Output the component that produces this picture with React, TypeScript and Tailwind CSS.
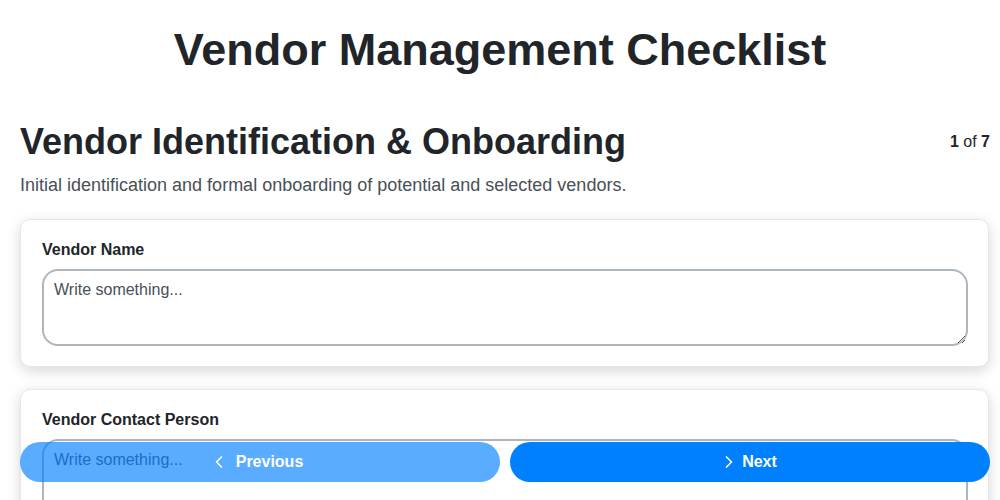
import React from "react";
import { ChevronLeft, ChevronRight } from "lucide-react";

const fields = ["Vendor Name", "Vendor Contact Person", "Vendor Email", "Vendor Phone"];

export default function App() {
  return (
    <div className="min-h-screen bg-white text-[#212529] font-['Liberation_Sans',Arial,sans-serif]">
      <h1 className="pt-[23px] text-center text-[45px] leading-[54px] font-bold">Vendor Management Checklist</h1>
      <div className="pl-[20px] pr-[10px] pb-[100px]">
        <div className="mt-[43px] flex items-center justify-between">
          <h2 className="text-[36px] leading-[43px] font-bold">Vendor Identification &amp; Onboarding</h2>
          <div className="text-[16px] leading-[24px]">
            <span className="font-bold">1</span> of <span className="font-bold">7</span>
          </div>
        </div>
        <p className="mt-[9px] text-[18px] leading-[27px] text-[#495057]">
          Initial identification and formal onboarding of potential and selected vendors.
        </p>
        <div className="mt-[20px] mr-[1px] flex flex-col gap-[22px]">
          {fields.map((f) => (
            <div
              key={f}
              className="rounded-[10px] border border-[#e5e7eb] bg-white pl-[21px] pr-[20px] pt-[18px] pb-[20px] shadow-[0_4px_14px_rgba(0,0,0,0.16)]"
            >
              <label className="block text-[16px] leading-[24px] font-bold">{f}</label>
              <textarea
                placeholder="Write something..."
                className="mt-[7px] block h-[77px] w-full rounded-[16px] border-2 border-[#adb5bd] bg-white px-[10px] py-[8px] text-[16px] leading-[22px] text-[#212529] placeholder:text-[#495057] outline-none font-['Liberation_Sans',Arial,sans-serif]"
              />
            </div>
          ))}
        </div>
      </div>
      <div className="fixed bottom-[18px] left-[20px] right-[10px] grid grid-cols-2 gap-[10px] font-['Liberation_Sans',Arial,sans-serif]">
        <button className="flex h-[40px] items-center justify-center gap-[7px] rounded-full bg-[#0080ff] pr-[8px] text-[16px] font-bold text-white opacity-65">
          <ChevronLeft size={20} strokeWidth={2} />
          Previous
        </button>
        <button className="flex h-[40px] items-center justify-center gap-[3px] rounded-full bg-[#0080ff] pr-[4px] text-[16px] font-bold text-white">
          <ChevronRight size={20} strokeWidth={2} />
          Next
        </button>
      </div>
    </div>
  );
}
